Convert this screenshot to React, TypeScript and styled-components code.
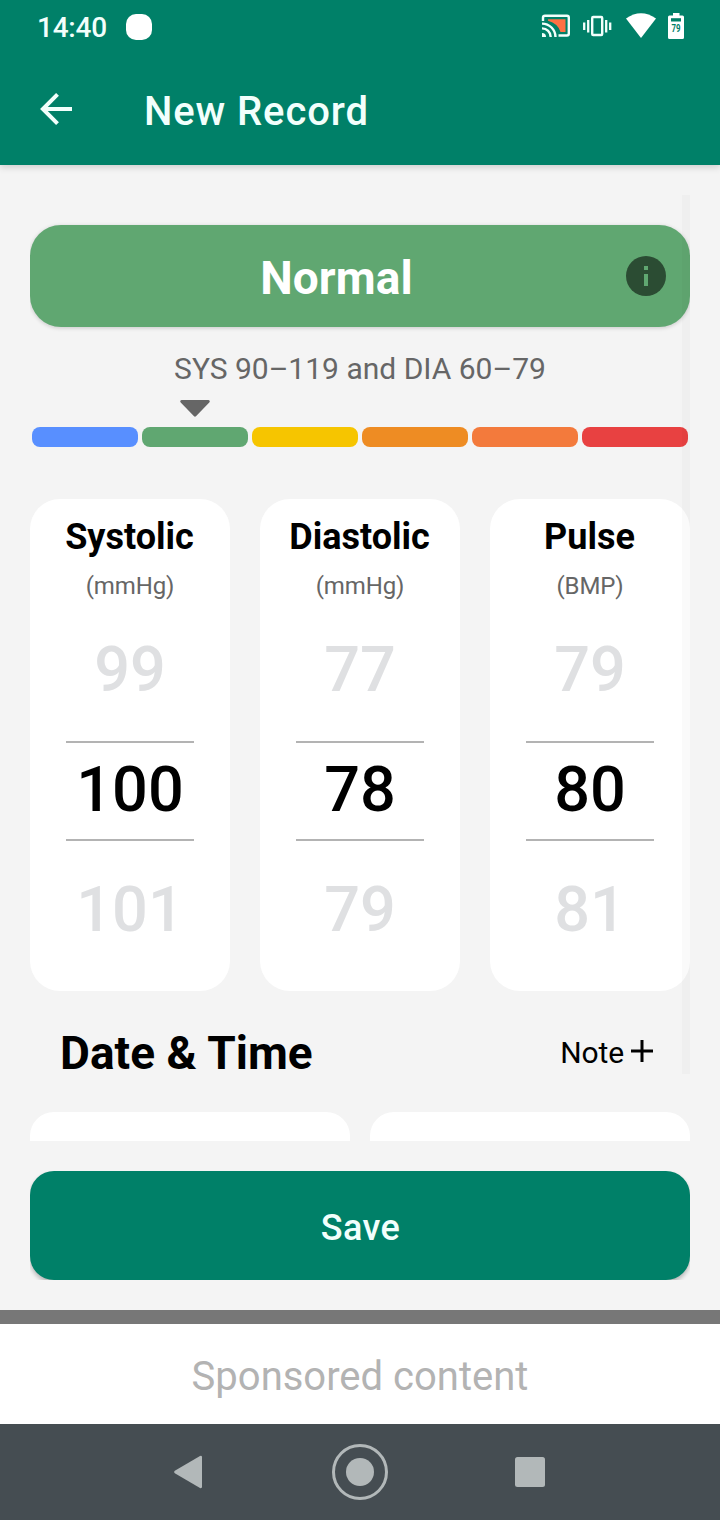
import React from "react";
import styled, { createGlobalStyle } from "styled-components";

const GlobalStyle = createGlobalStyle`
  * { box-sizing: border-box; }
  body { margin: 0; background: #f4f4f4; font-family: Roboto, "Liberation Sans", sans-serif; }
  button { font-family: inherit; border: 0; padding: 0; margin: 0; background: none; }
  svg { display: block; }
`;

const green = "#008068";

const Screen = styled.div`
  width: 720px;
  height: 1520px;
  display: flex;
  flex-direction: column;
  background: #f4f4f4;
  overflow: hidden;
`;

const Header = styled.header`
  height: 165px;
  flex: none;
  background: ${green};
  color: #fff;
  box-shadow: 0 2px 7px rgba(0, 0, 0, 0.17);
`;

const StatusBar = styled.div`
  height: 54px;
  padding: 0 35px 0 37px;
  display: flex;
  align-items: center;
`;

const Clock = styled.span`
  font-size: 28px;
  font-weight: 500;
  line-height: 54px;
  width: 89px;
  padding-top: 1px;
  letter-spacing: -0.25px;
  color: #f2fffc;
`;

const Notification = styled.span`
  width: 26px;
  height: 26px;
  border-radius: 10px;
  background: #fff;
`;

const StatusIcons = styled.div`
  margin-left: auto;
  height: 54px;
`;

const TitleBar = styled.div`
  height: 111px;
  padding-left: 40px;
  display: flex;
  align-items: center;
`;

const BackButton = styled.button`
  width: 104px;
  height: 111px;
  padding-bottom: 1px;
  display: flex;
  align-items: center;
  color: #f2fffc;
`;

const Title = styled.h1`
  margin: 5px 0 0;
  font-size: 40px;
  line-height: 48px;
  font-weight: 500;
  letter-spacing: 0.9px;
  color: #f2fffc;
`;

const ScrollArea = styled.main`
  position: relative;
  height: 946px;
  flex: none;
  margin: 30px 30px 0;
  padding-top: 30px;
  overflow: hidden;
`;

const ScrollBar = styled.div`
  position: absolute;
  top: 0;
  right: 0;
  width: 8px;
  height: 879px;
  background: rgba(0, 0, 0, 0.018);
`;

const Banner = styled.div`
  height: 102px;
  padding: 0 24px 0 17px;
  border-radius: 31px;
  background: #60a771;
  box-shadow: 0 1px 4px rgba(0, 0, 0, 0.18);
  display: flex;
  align-items: center;
`;

const BannerLabel = styled.strong`
  flex: 1;
  padding-top: 4px;
  text-align: center;
  font-size: 46px;
  font-weight: 700;
  letter-spacing: 0.1px;
  color: #fff;
`;

const RangeText = styled.p`
  margin: 24px 0 0;
  height: 36px;
  line-height: 36px;
  text-align: center;
  font-size: 30px;
  color: #666;
`;

const Scale = styled.div`
  display: grid;
  grid-template-columns: repeat(6, 106px);
  column-gap: 4px;
  margin: 13px 2px 0;
`;

const Step = styled.div`
  display: flex;
  flex-direction: column;
  align-items: center;
  justify-content: flex-end;
  height: 47px;
`;

const Segment = styled.div<{ $color: string }>`
  width: 100%;
  height: 20px;
  margin-top: 10px;
  border-radius: 8px;
  background: ${(p) => p.$color};
`;

const Pickers = styled.section`
  display: grid;
  grid-template-columns: repeat(3, 200px);
  column-gap: 30px;
  margin-top: 52px;
`;

const PickerCard = styled.div`
  height: 492px;
  padding-top: 16px;
  border-radius: 30px;
  background: #fff;
  display: flex;
  flex-direction: column;
  align-items: center;
`;

const PickerTitle = styled.h2`
  margin: 0 1px 0 0;
  font-size: 36px;
  line-height: 44px;
  font-weight: 700;
  color: #000;
`;

const PickerUnit = styled.span`
  margin-top: 13px;
  font-size: 24px;
  line-height: 28px;
  letter-spacing: -0.1px;
  color: #666;
`;

const Wheel = styled.div`
  width: 128px;
  margin-top: 23px;
  display: flex;
  flex-direction: column;
`;

const WheelValue = styled.div<{ $selected?: boolean }>`
  height: ${(p) => (p.$selected ? 100 : 118)}px;
  line-height: 94px;
  border: solid #b3b3b3;
  border-width: ${(p) => (p.$selected ? "2px 0" : "0")};
  text-align: center;
  white-space: nowrap;
  font-size: 63px;
  font-weight: 500;
  color: ${(p) => (p.$selected ? "#000" : "#dfe0e2")};
  &:last-child { line-height: 138px; }
`;

const SectionHeader = styled.div`
  height: 121px;
  padding: 0 37px 0 30px;
  display: flex;
  align-items: center;
  justify-content: space-between;
`;

const SectionTitle = styled.h2`
  margin: 2px 0 0;
  font-size: 46px;
  font-weight: 700;
  letter-spacing: 0.05px;
  color: #000;
`;

const NoteButton = styled.button`
  display: flex;
  align-items: center;
  gap: 7px;
  font-size: 30px;
  letter-spacing: -0.1px;
  color: #000;
`;

const NoteLabel = styled.span`
  padding-top: 2px;
`;

const Fields = styled.div`
  display: grid;
  grid-template-columns: 1fr 1fr;
  column-gap: 20px;
`;

const Field = styled.div`
  height: 100px;
  border-radius: 24px;
  background: #fff;
`;

const SaveArea = styled.div`
  margin: 30px 30px;
  height: 109px;
  flex: none;
  overflow: hidden;
`;

const SaveButton = styled.button`
  width: 100%;
  height: 109px;
  padding-top: 4px;
  padding-left: 1px;
  border-radius: 24px;
  background: ${green};
  box-shadow: 0 3px 4px rgba(0, 0, 0, 0.25);
  color: #f2fffc;
  font-size: 36px;
  font-weight: 500;
  letter-spacing: 0.4px;
`;

const Divider = styled.div`
  height: 14px;
  flex: none;
  background: #777;
`;

const Sponsored = styled.div`
  height: 100px;
  flex: none;
  padding-top: 3px;
  background: #fff;
  color: #b3b3b3;
  font-size: 40px;
  line-height: 100px;
  text-align: center;
`;

const NavBar = styled.nav`
  height: 96px;
  flex: none;
  background: #454d52;
  padding: 0 105px;
  display: grid;
  grid-template-columns: repeat(3, 170px);
  align-items: center;
  justify-items: center;
`;

const segments = ["#588fff", "#60a771", "#f6c500", "#ee8c23", "#f37a3c", "#e84141"];

const pickers = [
  { title: "Systolic", unit: "(mmHg)", values: [99, 100, 101] },
  { title: "Diastolic", unit: "(mmHg)", values: [77, 78, 79] },
  { title: "Pulse", unit: "(BMP)", values: [79, 80, 81] },
];

const SystemIcons = () => (
  <svg width="144" height="54" viewBox="541 0 144 54" fill="none">
    <path d="M543 21V17.5Q543 15.8 545 15.8H567Q568.8 15.8 568.8 17.5V33.5Q568.8 35.5 567 35.5H558.5" stroke="#f2fffc" strokeWidth="2.4" />
    <path d="M548 19.3H565.5V32H560.5Q558 23.5 548 20.8Z" fill="#ff7043" />
    <path d="M542 23.6A13.4 13.4 0 0 1 555.5 37M542 28.4A8.6 8.6 0 0 1 550.7 37" stroke="#f2fffc" strokeWidth="2.4" />
    <path d="M542 33A4 4 0 0 1 546 37H542Z" fill="#f2fffc" />
    <rect x="592.2" y="17" width="10" height="18" rx="1" stroke="#f2fffc" strokeWidth="2.4" />
    <path d="M584.2 22.5V30M588.2 20V32.5M606.2 20V32.5M610.2 22.5V30" stroke="#f2fffc" strokeWidth="2.3" />
    <path d="M626 18.6Q641 7.8 656 18.6L641 38Z" fill="#fff" />
    <path d="M673 13H679.5V15.4H682.5Q684 15.4 684 17V37.4Q684 39 682.5 39H669.5Q668 39 668 37.4V17Q668 15.4 669.5 15.4H673Z" fill="#fff" />
    <path d="M671 18.2H681V21.5H671Z" fill={green} />
    <text x="671.5" y="31.5" textLength="9" lengthAdjust="spacingAndGlyphs" fontFamily="Roboto, sans-serif" fontSize="10.5" fontWeight="700" fill={green}>79</text>
  </svg>
);

const BackArrow = () => (
  <svg width="33" height="32" viewBox="0 0 33 32" fill="none" stroke="currentColor" strokeWidth="4">
    <path d="M32 16H3M17.5 1.4L2.9 16L17.5 30.6" />
  </svg>
);

const InfoIcon = () => (
  <svg width="40" height="40" viewBox="0 0 40 40">
    <circle cx="20" cy="20" r="20" fill="#2b4c33" />
    <path d="M18 10h4v4h-4zM18 18h4v12h-4z" fill="#60a771" />
  </svg>
);

const Pointer = () => (
  <svg width="30" height="17" viewBox="0 0 30 17">
    <path d="M1.5 0H28.5Q30.6 .8 29.3 2.6L16.2 16Q15 17.4 13.8 16L.7 2.6Q-.6 .8 1.5 0Z" fill="#666" />
  </svg>
);

const Plus = () => (
  <svg width="22" height="24" viewBox="0 0 22 24" stroke="#000" strokeWidth="3">
    <path d="M11 0V22M0 11H22" />
  </svg>
);

export default function App() {
  return (
    <>
      <GlobalStyle />
      <Screen>
        <Header>
          <StatusBar>
            <Clock>14:40</Clock>
            <Notification />
            <StatusIcons>
              <SystemIcons />
            </StatusIcons>
          </StatusBar>
          <TitleBar>
            <BackButton aria-label="Back">
              <BackArrow />
            </BackButton>
            <Title>New Record</Title>
          </TitleBar>
        </Header>
        <ScrollArea>
          <Banner>
            <BannerLabel>Normal</BannerLabel>
            <InfoIcon />
          </Banner>
          <RangeText>SYS 90–119 and DIA 60–79</RangeText>
          <Scale>
            {segments.map((color, i) => (
              <Step key={color}>
                {i === 1 && <Pointer />}
                <Segment $color={color} />
              </Step>
            ))}
          </Scale>
          <Pickers>
            {pickers.map(({ title, unit, values }) => (
              <PickerCard key={title}>
                <PickerTitle>{title}</PickerTitle>
                <PickerUnit>{unit}</PickerUnit>
                <Wheel>
                  {values.map((v, i) => (
                    <WheelValue key={v} $selected={i === 1}>{v}</WheelValue>
                  ))}
                </Wheel>
              </PickerCard>
            ))}
          </Pickers>
          <SectionHeader>
            <SectionTitle>Date &amp; Time</SectionTitle>
            <NoteButton>
              <NoteLabel>Note</NoteLabel>
              <Plus />
            </NoteButton>
          </SectionHeader>
          <Fields>
            <Field />
            <Field />
          </Fields>
          <ScrollBar />
        </ScrollArea>
        <SaveArea>
          <SaveButton>Save</SaveButton>
        </SaveArea>
        <Divider />
        <Sponsored>Sponsored content</Sponsored>
        <NavBar>
          <svg width="34" height="34" viewBox="0 0 34 34">
            <path d="M27 .9Q29 .2 29 2.2V31.8Q29 33.8 27 33.1L1.8 18.2Q.2 17 1.8 15.8Z" fill="#b2b8b9" />
          </svg>
          <svg width="56" height="56" viewBox="0 0 56 56">
            <circle cx="28" cy="28" r="26.5" fill="none" stroke="#b2b8b9" strokeWidth="3" />
            <circle cx="28" cy="28" r="14" fill="#b2b8b9" />
          </svg>
          <svg width="30" height="30" viewBox="0 0 30 30">
            <rect width="30" height="30" rx="2.5" fill="#b2b8b9" />
          </svg>
        </NavBar>
      </Screen>
    </>
  );
}
